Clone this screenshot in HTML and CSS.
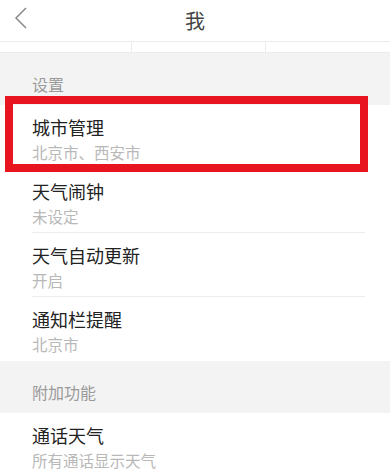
FILE: index.html
```html
<!DOCTYPE html>
<html lang="zh-CN">
<head>
    <meta charset="UTF-8">
    <meta name="viewport" content="width=device-width, initial-scale=1.0">
    <title>我</title>
    <link rel="stylesheet" href="styles.css">
</head>
<body>
    <header class="top-bar">
        <span class="back-btn">
            <svg width="14" height="22" viewBox="0 0 14 22">
                <polyline points="12,1 2,11 12,21" fill="none" stroke="#8a8a8a" stroke-width="1.5"/>
            </svg>
        </span>
        <h1 class="title">我</h1>
    </header>

    <div class="tab-strip">
        <div class="tab-cell"></div>
        <div class="tab-cell"></div>
        <div class="tab-cell"></div>
    </div>

    <div class="section-head">设置</div>
    <ul class="list">
        <li class="item">
            <div class="item-title">城市管理</div>
            <div class="item-sub">北京市、西安市</div>
            <span class="highlight"></span>
        </li>
        <li class="item">
            <div class="item-title">天气闹钟</div>
            <div class="item-sub">未设定</div>
        </li>
        <li class="item">
            <div class="item-title">天气自动更新</div>
            <div class="item-sub">开启</div>
        </li>
        <li class="item">
            <div class="item-title">通知栏提醒</div>
            <div class="item-sub">北京市</div>
        </li>
    </ul>

    <div class="section-head">附加功能</div>
    <ul class="list">
        <li class="item">
            <div class="item-title">通话天气</div>
            <div class="item-sub">所有通话显示天气</div>
        </li>
    </ul>
</body>
</html>
```

FILE: styles.css
```css
body {
    font-family: "Noto Sans CJK SC", "Noto Sans", sans-serif;
    background-color: #fff;
    color: #222;
    margin: 0;
    padding: 0;
    overflow: hidden;
}

.top-bar {
    height: 41px;
    display: flex;
    align-items: center;
    justify-content: center;
    position: relative;
    border-bottom: 1px solid #ececec;
}

.back-btn {
    position: absolute;
    left: 14px;
    top: 7px;
    display: flex;
}

.title {
    margin: 0;
    font-size: 20px;
    line-height: 24px;
    font-weight: normal;
    color: #444;
}

.tab-strip {
    display: grid;
    grid-template-columns: 131px 134px 1fr;
    height: 10px;
    border-bottom: 1px solid #ececec;
}

.tab-cell + .tab-cell {
    border-left: 1px solid #ececec;
}

.section-head {
    background-color: #f3f3f3;
    color: #9a9a9a;
    font-size: 16px;
    height: 52px;
    box-sizing: border-box;
    padding: 20px 0 0 32px;
    line-height: 22px;
}

.list {
    list-style: none;
    margin: 0;
    padding: 0;
    background-color: #fff;
}

.item {
    position: relative;
    height: 64px;
    box-sizing: border-box;
    margin: 0 25px 0 32px;
    padding-top: 10px;
    border-bottom: 1px solid #ececec;
}

.item:last-child {
    border-bottom: none;
}

.item-title {
    font-size: 18px;
    line-height: 24px;
    color: #222;
}

.item-sub {
    font-size: 15.5px;
    line-height: 20px;
    margin-top: 3px;
    color: #b8b8b8;
}

.highlight {
    position: absolute;
    left: -27px;
    top: -9px;
    width: 363px;
    height: 76px;
    box-sizing: border-box;
    border: 8px solid #e8141f;
}
```
